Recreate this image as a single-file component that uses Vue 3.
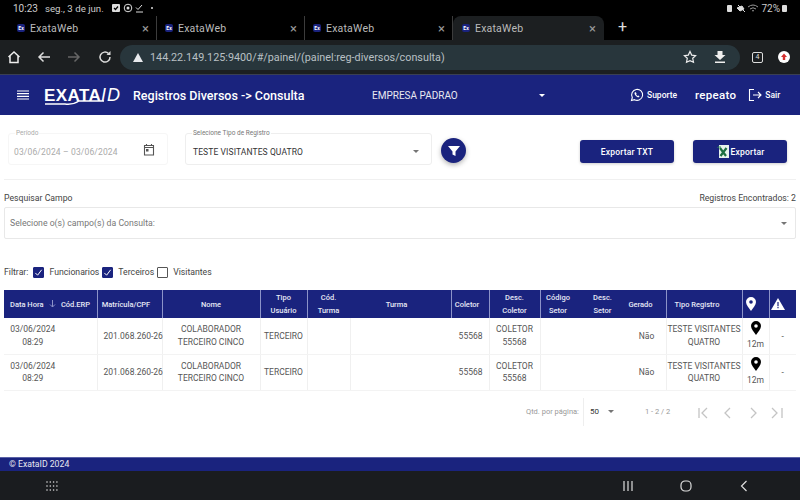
<script setup>
const tabs = [
  { id: 1, active: false },
  { id: 2, active: false },
  { id: 3, active: false },
  { id: 4, active: true }
]

const filters = [
  { label: 'Funcionarios', checked: true },
  { label: 'Terceiros', checked: true },
  { label: 'Visitantes', checked: false }
]

const widths = [54, 39, 65, 98, 47, 43, 101, 38, 51, 48, 39, 39, 76, 27, 27]

const rows = [1, 2]
</script>

<template>
  <div class="screen">
    <div class="status">
      <div class="status-left">
        <span>10:23</span>
        <span class="date">seg., 3 de jun.</span>
        <svg class="st-icons" width="46" height="10" viewBox="0 0 46 10">
          <rect x="1" y="1" width="8" height="8" rx="1" fill="#ddd" />
          <path d="M3 5l1.500 1.500L7 3.500" stroke="#000" stroke-width="1.200" fill="none" />
          <circle cx="17" cy="5" r="3.800" stroke="#ddd" stroke-width="1" fill="none" />
          <circle cx="17" cy="5" r="1.500" fill="#ddd" />
          <path d="M25 4.500l2 2 4-4.500M25 9h7" stroke="#ddd" stroke-width="1" fill="none" />
          <circle cx="41" cy="5" r="1" fill="#ddd" />
        </svg>
      </div>
      <div class="status-right">
        <svg width="33" height="10" viewBox="0 0 33 10">
          <rect x="1" y="2" width="5" height="7" rx="1" fill="#ddd" />
          <path d="M12 2l7 7M11 5l5-2 2 3-4 2z" stroke="#ddd" stroke-width="1" fill="#ddd" />
          <path d="M22 4q5-4 10 0M24 6q3-2.500 6 0M26 8q1-1 2 0" stroke="#999" stroke-width="1" fill="none" />
        </svg>
        <span class="pct">72%</span>
        <span class="battery"></span>
      </div>
    </div>

    <div class="tabs">
      <div v-for="t in tabs" :key="t.id" class="tab" :class="{ active: t.active }">
        <span class="favicon">Ex</span>
        <span class="tab-title">ExataWeb</span>
        <span class="tab-close">×</span>
      </div>
      <span class="new-tab">+</span>
    </div>

    <div class="toolbar">
      <svg class="tb-icon" width="16" height="16" viewBox="0 0 16 16">
        <path d="M2.500 8L8 3l5.500 5M4 7v6.500h8V7" stroke="#eee" stroke-width="1.500" fill="none" />
      </svg>
      <svg class="tb-icon" width="16" height="16" viewBox="0 0 16 16">
        <path d="M14 8H3M7.500 3.500L3 8l4.500 4.500" stroke="#ddd" stroke-width="1.500" fill="none" />
      </svg>
      <svg class="tb-icon" width="16" height="16" viewBox="0 0 16 16">
        <path d="M2 8h11M8.500 3.500L13 8l-4.500 4.500" stroke="#666" stroke-width="1.500" fill="none" />
      </svg>
      <svg class="tb-icon" width="16" height="16" viewBox="0 0 16 16">
        <path d="M13 8a5 5 0 1 1-1.500-3.500" stroke="#ddd" stroke-width="1.500" fill="none" />
        <path d="M13.500 2v4h-4z" fill="#ddd" />
      </svg>
      <div class="omnibox">
        <svg width="10" height="9" viewBox="0 0 10 9"><path d="M5 0l5 9H0z" fill="#e8eaed" /></svg>
        <span class="url">144.22.149.125:9400/#/painel/(painel:reg-diversos/consulta)</span>
        <svg class="star" width="14" height="14" viewBox="0 0 14 14">
          <path d="M7 1.500l1.700 3.600 3.900.5-2.900 2.700.8 3.900L7 10.700l-3.500 1.500.8-3.900L1.400 5.600l3.900-.5z" stroke="#eee" stroke-width="1.200" fill="none" />
        </svg>
        <svg class="down" width="14" height="14" viewBox="0 0 14 14">
          <path d="M4.500 1h5v4h3L7 10 1.500 5h3zM2 11.500h10V13H2z" fill="#eee" />
        </svg>
      </div>
      <span class="tab-count">4</span>
      <svg class="profile" width="14" height="14" viewBox="0 0 14 14">
        <circle cx="7" cy="7" r="6" fill="#fff" />
        <path d="M7 3.500L10 7H8.200v3H5.800V7H4z" fill="#d32f2f" />
      </svg>
    </div>

    <header class="app-header">
      <svg class="menu" width="12" height="10" viewBox="0 0 12 10">
        <path d="M0 1h12M0 3.700h12M0 6.400h12M0 9h12" stroke="#fff" stroke-width="1.200" />
      </svg>
      <div class="logo">
        <b>EXATA</b><i>ID</i>
        <svg class="swoosh" width="62" height="6" viewBox="0 0 62 6">
          <path d="M1 4h20q8 1 14-3h25" stroke="#fff" stroke-width="1.400" fill="none" />
        </svg>
      </div>
      <span class="page-title">Registros Diversos -&gt; Consulta</span>
      <div class="company">
        <span>EMPRESA PADRAO</span>
        <span class="caret light"></span>
      </div>
      <div class="header-right">
        <svg width="14" height="14" viewBox="0 0 14 14">
          <path d="M1.500 12.500l.8-3A5.500 5.500 0 1 1 4.500 11.700z" stroke="#fff" stroke-width="1.100" fill="none" />
          <path d="M5 4.300c-.8.600-.6 1.900.5 3.200s2.400 2 3.400 1.700l.6-1-1.300-.8-.6.500c-.7-.3-1.200-.9-1.500-1.600l.5-.6-.7-1.400z" fill="#fff" />
        </svg>
        <span class="support">Suporte</span>
        <span class="user">repeato</span>
        <svg width="14" height="14" viewBox="0 0 14 14">
          <path d="M6 1.500H1.500v11H6M5 7h8M10 4l3 3-3 3" stroke="#fff" stroke-width="1.100" fill="none" />
        </svg>
        <span class="support">Sair</span>
      </div>
    </header>

    <main class="content">
      <section class="top-bar">
        <div class="field period">
          <span class="field-label">Período</span>
          <span class="period-value">03/06/2024 – 03/06/2024</span>
          <svg width="12" height="13" viewBox="0 0 12 13">
            <path d="M1.500 2.500h9v9.500h-9zM1.500 4.500h9M3.500 1v2M8.500 1v2" stroke="#555" stroke-width="1.100" fill="none" />
            <rect x="3" y="6" width="2.500" height="2.500" fill="#555" />
          </svg>
        </div>
        <div class="field type">
          <span class="field-label">Selecione Tipo de Registro</span>
          <span class="type-value">TESTE VISITANTES QUATRO</span>
          <span class="caret"></span>
        </div>
        <button class="round-btn">
          <svg width="12" height="12" viewBox="0 0 12 12"><path d="M0 1h12L7.500 6.500V11l-3-1.500v-3z" fill="#fff" /></svg>
        </button>
        <button class="action first">Exportar TXT</button>
        <button class="action">
          <svg width="15" height="15" viewBox="0 0 15 15">
            <rect x="3" y="1" width="10" height="13" fill="#e8f3ec" />
            <path d="M1.500 3.500L2 3h3" stroke="#2e8b57" stroke-width="1" fill="none" />
            <path d="M4 4l6 8M10.500 4l-6 8" stroke="#1d6f42" stroke-width="2.200" fill="none" />
          </svg>
          <span>Exportar</span>
        </button>
      </section>

      <div class="search-head">
        <span>Pesquisar Campo</span>
        <span>Registros Encontrados: 2</span>
      </div>
      <div class="search-box">
        <span>Selecione o(s) campo(s) da Consulta:</span>
        <span class="caret"></span>
      </div>

      <div class="filter-row">
        <span class="filter-title">Filtrar:</span>
        <label v-for="f in filters" :key="f.label" class="check">
          <span class="box" :class="{ on: f.checked }">
            <svg v-if="f.checked" width="9" height="9" viewBox="0 0 10 10">
              <path d="M1.500 5.500l2.500 2.500 4.500-6" stroke="#fff" stroke-width="1.100" fill="none" />
            </svg>
          </span>
          {{ f.label }}
        </label>
      </div>

      <table class="grid">
        <colgroup>
          <col v-for="(w, i) in widths" :key="i" :style="{ width: w + 'px' }" />
        </colgroup>
        <thead>
          <tr>
            <th class="nb">
              Data Hora
              <svg class="sort" width="7" height="8" viewBox="0 0 7 8">
                <path d="M3.500 0v7M1 4.500L3.500 7 6 4.500" stroke="#8c93c8" stroke-width="1" fill="none" />
              </svg>
            </th>
            <th class="nb pr-4">Cód.ERP</th>
            <th class="pr-7">Matrícula/CPF</th>
            <th>Nome</th>
            <th>Tipo<br />Usuário</th>
            <th>Cód.<br />Turma</th>
            <th class="nb pr-8">Turma</th>
            <th class="pr-6">Coletor</th>
            <th>Desc.<br />Coletor</th>
            <th class="pr-12">Código<br />Setor</th>
            <th class="nb pr-10">Desc.<br />Setor</th>
            <th class="nb pr-12">Gerado</th>
            <th class="pr-14">Tipo Registro</th>
            <th class="pr-10">
              <svg width="10" height="14" viewBox="0 0 10 14">
                <path d="M5 0a5 5 0 0 1 5 5c0 3-3 6-5 9-2-3-5-6-5-9a5 5 0 0 1 5-5z" fill="#fff" />
                <circle cx="5" cy="5" r="1.800" fill="#1a237e" />
              </svg>
            </th>
            <th class="pr-10">
              <svg width="14" height="12" viewBox="0 0 14 12">
                <path d="M7 0l7 12H0z" fill="#fff" />
                <path d="M6.400 4h1.200v4.200H6.400zM6.400 9h1.200v1.200H6.400z" fill="#1a237e" />
              </svg>
            </th>
          </tr>
        </thead>
        <tbody>
          <tr v-for="r in rows" :key="r">
            <td class="nb first">03/06/2024<br />08:29</td>
            <td class="nb"></td>
            <td class="cpf">201.068.260-26</td>
            <td>COLABORADOR<br />TERCEIRO CINCO</td>
            <td>TERCEIRO</td>
            <td></td>
            <td></td>
            <td class="right nb">55568</td>
            <td>COLETOR<br />55568</td>
            <td></td>
            <td class="nb"></td>
            <td class="nb">Não</td>
            <td>TESTE VISITANTES<br />QUATRO</td>
            <td class="pin">
              <svg width="10" height="14" viewBox="0 0 10 14">
                <path d="M5 0a5 5 0 0 1 5 5c0 3-3 6-5 9-2-3-5-6-5-9a5 5 0 0 1 5-5z" fill="#000" />
                <circle cx="5" cy="5" r="1.800" fill="#fff" />
              </svg>
              <div>12m</div>
            </td>
            <td>-</td>
          </tr>
        </tbody>
      </table>

      <div class="pager">
        <span class="pager-label">Qtd. por página:</span>
        <div class="page-size">
          <span>50</span>
          <span class="caret"></span>
        </div>
        <span class="range">1 - 2 / 2</span>
        <svg width="90" height="12" viewBox="0 0 90 12">
          <g stroke="#c4c4c4" stroke-width="1.300" fill="none">
            <path d="M1 1v10M9 1L4 6l5 5" />
            <path d="M32 1l-5 5 5 5" />
            <path d="M53 1l5 5-5 5" />
            <path d="M74 1l5 5-5 5M84 1v10" />
          </g>
        </svg>
      </div>
    </main>

    <footer class="app-footer">© ExataID 2024</footer>

    <nav class="nav-bar">
      <svg class="apps" width="12" height="10" viewBox="0 0 12 10">
        <g fill="#ddd">
          <circle v-for="n in 12" :key="n" :cx="1 + ((n - 1) % 4) * 3.300" :cy="1 + Math.floor((n - 1) / 4) * 4" r="0.800" />
        </g>
      </svg>
      <svg class="recent" width="10" height="10" viewBox="0 0 10 10">
        <path d="M1 0v10M5 0v10M9 0v10" stroke="#ddd" stroke-width="1.200" />
      </svg>
      <svg class="home" width="12" height="12" viewBox="0 0 12 12">
        <rect x="1" y="1" width="10" height="10" rx="4" stroke="#ddd" stroke-width="1.200" fill="none" />
      </svg>
      <svg class="back" width="8" height="12" viewBox="0 0 8 12">
        <path d="M6.500 1L1.500 6l5 5" stroke="#ddd" stroke-width="1.200" fill="none" />
      </svg>
    </nav>
  </div>
</template>

<style>
html, body {
  margin: 0;
  background: #fff;
}
</style>

<style scoped>
.screen {
  width: 800px;
  height: 500px;
  display: flex;
  flex-direction: column;
  overflow: hidden;
  font-family: Roboto, "Liberation Sans", sans-serif;
  background: #fff;
  color: #333;
}

.status {
  height: 16px;
  flex: none;
  background: #000;
  color: #ccc;
  font-size: 10px;
  display: flex;
  align-items: center;
  justify-content: space-between;
  padding: 0 13px 0 13px;
}
.status-left, .status-right {
  display: flex;
  align-items: center;
}
.date {
  margin-left: 7px;
  margin-right: 7px;
  font-size: 9.700px;
}
.pct {
  margin-left: 2px;
}
.battery {
  width: 5px;
  height: 7px;
  background: #ddd;
  margin-left: 2px;
  border-radius: 1px;
}

.tabs {
  height: 24px;
  flex: none;
  background: #000;
  display: flex;
  align-items: stretch;
  padding-left: 9px;
}
.tab {
  width: 148px;
  box-sizing: border-box;
  display: flex;
  align-items: center;
  padding: 0 8px;
  color: #bbb;
  font-size: 10.500px;
  border-right: 1px solid #3c3c3c;
}
.tab.active {
  background: #1c1f21;
  border-right: none;
  border-radius: 8px 8px 0 0;
  padding-left: 9px;
  width: 151px;
}
.tab.active .tab-close {
  margin-right: 0;
}
.favicon {
  width: 8px;
  height: 8px;
  border-radius: 2px;
  background: #1a237e;
  color: #fff;
  font-size: 5px;
  line-height: 8px;
  text-align: center;
  margin-right: 5px;
  font-weight: 700;
}
.tab-title {
  flex: 1;
  letter-spacing: 0.200px;
}
.tab-close {
  color: #999;
  font-size: 13px;
  line-height: 1;
  margin-right: -1px;
}
.new-tab {
  color: #ddd;
  font-size: 16px;
  line-height: 22px;
  margin-left: 14px;
}

.toolbar {
  height: 35px;
  flex: none;
  background: #1c1f21;
  display: flex;
  align-items: center;
  padding: 0 0 0 6px;
  border-bottom: 1px solid #3a3f52;
  box-sizing: border-box;
}
.tb-icon {
  margin-right: 14px;
  flex: none;
}
.tb-icon:nth-child(3) {
  margin-right: 15px;
}
.omnibox {
  width: 620px;
  height: 25px;
  margin-left: -7px;
  background: #28363c;
  border-radius: 13px;
  display: flex;
  align-items: center;
  padding: 0 0 0 13px;
  box-sizing: border-box;
  color: #b9c0c4;
  font-size: 10.800px;
}
.url {
  margin-left: 7px;
  flex: 1;
}
.star {
  margin-right: 16px;
}
.down {
  margin-right: 13px;
}
.tab-count {
  width: 9px;
  height: 9px;
  border: 1px solid #ddd;
  border-radius: 2px;
  color: #ddd;
  font-size: 7px;
  line-height: 9px;
  text-align: center;
  margin-left: 12px;
}
.profile {
  margin-left: 14px;
}

.app-header {
  height: 40px;
  flex: none;
  background: #1a237e;
  color: #fff;
  display: flex;
  align-items: center;
  padding-left: 17px;
  box-sizing: border-box;
}
.logo {
  position: relative;
  margin-left: 15px;
  font-family: "Liberation Sans", sans-serif;
  font-size: 17px;
  line-height: 16px;
  width: 79px;
  white-space: nowrap;
}
.logo b {
  font-weight: 700;
  letter-spacing: 0.400px;
}
.logo i {
  font-size: 18px;
  font-weight: 400;
  letter-spacing: 1px;
}
.swoosh {
  position: absolute;
  left: 0;
  top: 13px;
}
.page-title {
  margin-left: 10px;
  font-size: 12.500px;
  font-weight: 500;
  width: 239px;
  white-space: nowrap;
}
.company {
  width: 173px;
  display: flex;
  align-items: center;
  justify-content: space-between;
  font-size: 10px;
  color: #e8e8f0;
}
.header-right {
  margin-left: 85px;
  display: flex;
  align-items: center;
}
.support {
  font-size: 8.500px;
  font-weight: 500;
  margin-left: 3px;
}
.user {
  font-size: 11.500px;
  font-weight: 500;
  margin: 0 12px 0 18px;
  letter-spacing: 0.300px;
}
.user + svg + .support {
  margin-left: 3px;
}

.caret {
  width: 0;
  height: 0;
  border-left: 3px solid transparent;
  border-right: 3px solid transparent;
  border-top: 3px solid #757575;
  display: block;
}
.caret.light {
  border-top-color: #fff;
}

.content {
  flex: 1;
  min-height: 0;
  padding: 0 4px;
  display: flex;
  flex-direction: column;
}
.top-bar {
  height: 64px;
  flex: none;
  display: flex;
  align-items: flex-start;
  border-bottom: 1px solid #f0f0f0;
}
.field {
  margin-top: 18px;
  height: 32px;
  box-sizing: border-box;
  position: relative;
  display: flex;
  align-items: center;
  border: 1px solid #eeeeee;
  border-radius: 3px;
  padding-top: 5px !important;
}
.field-label {
  position: absolute;
  left: 6px;
  top: -5px;
  font-size: 6.500px;
  line-height: 8px;
  background: #fff;
  padding: 0 1px;
  color: #777;
}
.period {
  width: 160px;
  margin-left: 4px;
  padding: 0 30px 0 5px;
  justify-content: space-between;
  border-color: #f6f6f6;
}
.period .field-label {
  color: #aaa;
}
.period-value {
  font-size: 8.500px;
  color: #aaa;
  white-space: nowrap;
  letter-spacing: 0.150px;
}
.period svg {
  position: absolute;
  right: 12px;
  top: 9px;
}
.type {
  width: 247px;
  margin-left: 17px;
  padding: 0 12px 0 7px;
  justify-content: space-between;
}
.type-value {
  font-size: 8.500px;
  color: #333;
  letter-spacing: 0.100px;
}
.round-btn {
  width: 25px;
  height: 25px;
  margin: 23px 0 0 9px;
  padding: 0;
  border: none;
  border-radius: 50%;
  background: #1a237e;
  box-shadow: 0 2px 5px rgba(0, 0, 0, 0.3);
  display: flex;
  align-items: center;
  justify-content: center;
}
.action {
  width: 94px;
  height: 23px;
  margin: 25px 0 0 19px;
  padding: 0;
  border: none;
  border-radius: 3px;
  background: #1a237e;
  color: #fff;
  font-family: inherit;
  font-size: 8.500px;
  font-weight: 500;
  letter-spacing: 0.200px;
  display: flex;
  align-items: center;
  justify-content: center;
  box-shadow: 0 1px 3px rgba(0, 0, 0, 0.2);
}
.action.first {
  margin-left: 114px;
}

.search-head {
  display: flex;
  justify-content: space-between;
  font-size: 8.700px;
  line-height: 12px;
  margin-top: 12px;
  color: #444;
}
.search-box {
  height: 32px;
  box-sizing: border-box;
  margin-top: 3px;
  border: 1px solid #e8e8e8;
  border-radius: 2px;
  display: flex;
  align-items: center;
  justify-content: space-between;
  padding: 0 8px 0 5px;
  font-size: 8.700px;
  color: #777;
}

.filter-row {
  display: flex;
  align-items: center;
  height: 14px;
  margin-top: 26px;
  font-size: 8.700px;
  color: #444;
}
.filter-title {
  margin-right: 5px;
}
.check {
  display: flex;
  align-items: center;
  margin-right: 3px;
}
.box {
  width: 11px;
  height: 11px;
  box-sizing: border-box;
  border: 1px solid #555;
  border-radius: 1px;
  margin-right: 5px;
  display: flex;
  align-items: center;
  justify-content: center;
}
.box.on {
  background: #1a237e;
  border-color: #1a237e;
}

.grid {
  width: 792px;
  margin-top: 11px;
  border-collapse: collapse;
  table-layout: fixed;
  font-size: 8.500px;
}
.grid th {
  height: 28px;
  padding: 0;
  background: #1a237e;
  color: #e6e8f5;
  font-size: 7.500px;
  font-weight: 500;
  line-height: 13px;
  text-align: center;
  border-left: 1px solid #8c93c8;
  white-space: nowrap;
}
.grid th:first-child {
  text-align: left;
  padding-left: 6px;
  border-left: none;
}
.grid th.nb {
  border-left-color: #1a237e;
}
.grid th.pr-4 { padding-right: 4px; }
.grid th.pr-6 { padding-right: 6px; }
.grid th.pr-7 { padding-right: 7px; }
.grid th.pr-8 { padding-right: 8px; }
.grid th.pr-10 { padding-right: 10px; }
.grid th.pr-12 { padding-right: 12px; }
.grid th.pr-14 { padding-right: 14px; }
.grid th svg {
  display: block;
  margin: 0 auto;
}
.grid th svg.sort {
  display: inline-block;
  margin: 0 0 0 4px;
  vertical-align: -1px;
}
.grid td {
  height: 36px;
  padding: 0;
  box-sizing: border-box;
  text-align: center;
  line-height: 12.500px;
  color: #555;
  border-left: 1px solid #f0f0f0;
  border-bottom: 1px solid #f3f3f3;
  white-space: nowrap;
}
.grid td:first-child {
  border-left: none;
}
.grid td.first {
  padding-left: 4px;
}
.grid td.nb {
  border-left-color: transparent;
}
.grid td.right {
  text-align: right;
  padding-right: 6px;
}
.grid td.cpf {
  text-align: left;
  padding-left: 6px;
}
.pin svg {
  display: block;
  margin: 0 auto 3px;
}

.pager {
  display: flex;
  align-items: center;
  height: 34px;
  padding-left: 522px;
  margin-top: 4px;
  font-size: 7.500px;
  color: #999;
}
.pager-label {
  width: 54px;
  white-space: nowrap;
}
.page-size {
  width: 35px;
  height: 28px;
  box-sizing: border-box;
  margin-left: 3px;
  padding: 0 4px 0 6px;
  display: flex;
  align-items: center;
  justify-content: space-between;
  border-left: 1px solid #eee;
  color: #333;
  font-size: 8px;
}
.range {
  margin-left: 27px;
  width: 52px;
}
.pager svg {
  margin-left: 1px;
  margin-top: 2px;
}

.app-footer {
  height: 14px;
  flex: none;
  box-sizing: border-box;
  background: #1a237e;
  color: #e8e8f0;
  font-size: 8.700px;
  line-height: 13px;
  padding-left: 9px;
  border-top: 1px solid #5a61a6;
}
.nav-bar {
  height: 29px;
  flex: none;
  background: #1a1c1f;
  display: flex;
  align-items: center;
}
.apps {
  margin-left: 46px;
}
.recent {
  margin-left: 565px;
}
.home {
  margin-left: 47px;
}
.back {
  margin-left: 48px;
}
</style>
